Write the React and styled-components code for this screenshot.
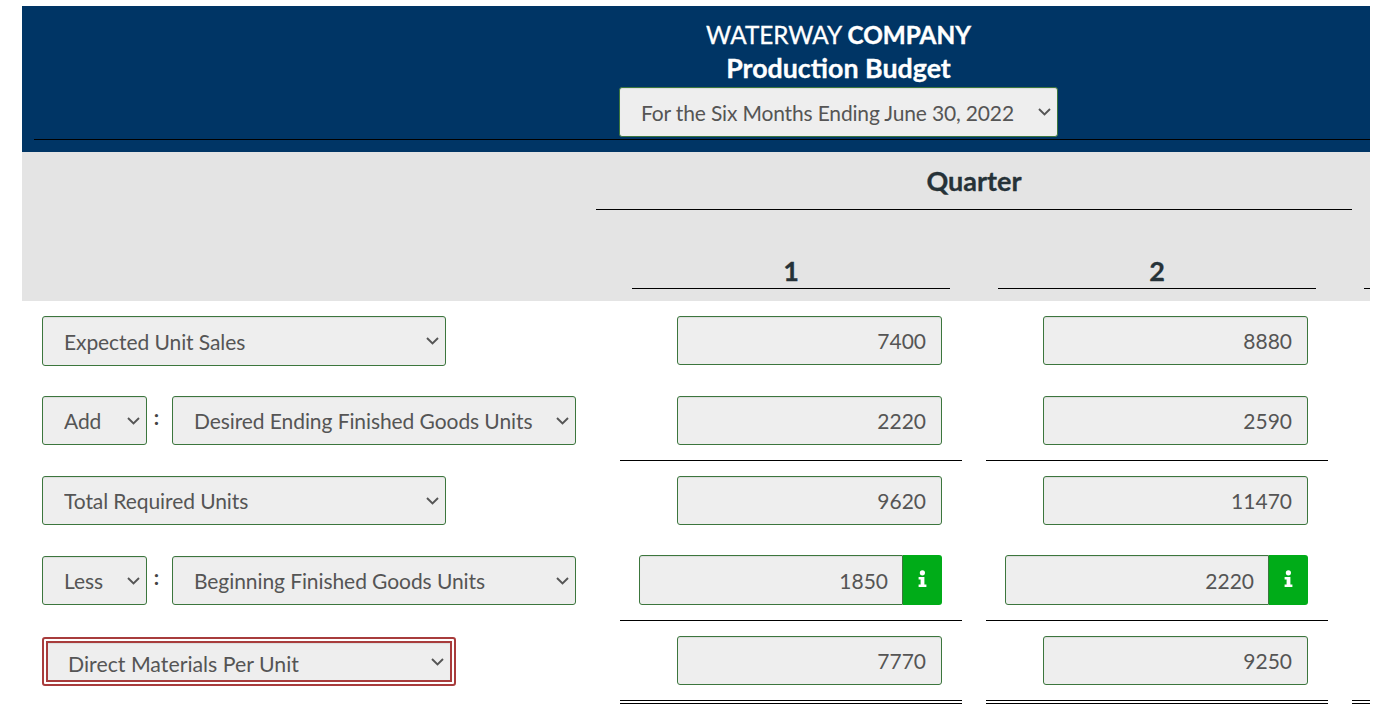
import React from 'react';
import styled, { createGlobalStyle } from 'styled-components';

const GlobalStyle = createGlobalStyle`
    html, body {
        margin: 0;
        padding: 0;
        background: #fff;
        overflow: hidden;
    }
    body {
        font-family: Lato, "Open Sans", sans-serif;
    }
`
const Sheet = styled.div`
    width: 1348px;
    margin: 6px 0 0 22px;
    overflow: hidden;
`
const Header = styled.header`
    height: 146px;
    background-color: #003565;
    padding-left: 12px;
    box-sizing: border-box;
`
const HeaderInner = styled.div`
    height: 134px;
    box-sizing: border-box;
    padding: 12px 0 0 273px;
    border-bottom: 1px solid #000;
    display: flex;
    flex-direction: column;
    align-items: center;
`
const Title = styled.h1`
    margin: 0;
    color: #fff;
    font-size: ${props => props.$size}px;
    line-height: ${props => props.$line}px;
    font-weight: ${props => props.$light ? 400 : 700};
    -webkit-text-stroke: 0.3px #fff;
    & b {
        font-weight: 700;
        -webkit-text-stroke: 0.4px #fff;
    }
`
const SelectBox = styled.div`
    position: relative;
    flex: none;
    display: flex;
    width: ${props => props.$width || 404}px;
    height: ${props => props.$height || 49}px;
    margin-top: ${props => props.$top || 0}px;
`
const Select = styled.select`
    appearance: none;
    width: 100%;
    height: 100%;
    box-sizing: border-box;
    padding: 0 21px;
    border: 1px solid #3c763d;
    border-radius: 3px;
    background-color: #eee;
    box-shadow: inset 0 1px 1px rgba(0, 0, 0, .075);
    color: #555;
    font-family: inherit;
    font-size: 21px;
    letter-spacing: ${props => props.$tight ? -0.16 : -0.08}px;
    outline: none;
`
const Chevron = styled.svg`
    position: absolute;
    right: ${props => props.$right || 7}px;
    top: 50%;
    width: 13px;
    height: 8px;
    margin-top: -4px;
    pointer-events: none;
`
const Band = styled.section`
    height: 149px;
    background-color: #e4e4e4;
    display: grid;
    grid-template-columns: 574px 756px 18px;
    grid-template-rows: 58px 91px;
`
const QuarterCell = styled.div`
    grid-column: 2;
    border-bottom: 1px solid #000;
    display: flex;
    justify-content: center;
    align-items: flex-start;
    padding-top: 13px;
    color: #263238;
    font-size: 27px;
    line-height: 32px;
    font-weight: 700;
    -webkit-text-stroke: 0.3px #263238;
`
const NumberRow = styled.div`
    grid-column: 1 / -1;
    display: grid;
    grid-template-columns: 610px 318px 48px 318px 48px 6px;
    align-items: end;
    height: 79px;
`
const NumberCell = styled.div`
    grid-column: ${props => props.$col};
    height: 32px;
    border-bottom: 1px solid #000;
    text-align: center;
    color: #263238;
    font-size: 27px;
    line-height: 30px;
    font-weight: 700;
    -webkit-text-stroke: 0.3px #263238;
`
const Body = styled.div`
    padding-top: 15px;
`
const Row = styled.div`
    display: grid;
    grid-template-columns: 586px 366px 366px 30px;
    height: 80px;
`
const LabelCell = styled.div`
    padding-left: 20px;
    display: flex;
    align-items: flex-start;
`
const Colon = styled.span`
    width: 25px;
    box-sizing: border-box;
    padding-right: 6px;
    text-align: center;
    color: #444;
    font-size: 21px;
    font-weight: 700;
    line-height: 42px;
`
const ErrorFrame = styled.div`
    border: 2px solid #a83c3c;
    border-radius: 3px;
    background: #fff;
    padding: 2px;
    margin-top: 1px;
    display: flex;
`
const ErrorSelect = styled(Select)`
    padding: 4px 20px 0;
    border: 2px solid #a83c3c;
    border-radius: 0;
    font-size: 21.3px;
    letter-spacing: 0;
`
const ValueCell = styled.div`
    position: relative;
    height: 100%;
    box-sizing: border-box;
    padding-right: 32px;
    display: flex;
    justify-content: flex-end;
    align-items: flex-start;
`
const Rule = styled.div`
    position: absolute;
    left: 12px;
    right: ${props => props.$open ? 0 : 12}px;
    top: ${props => props.$top}px;
    height: ${props => props.$double ? 2 : 0}px;
    border-top: 1px solid #000;
    border-bottom: ${props => props.$double ? '1px solid #000' : 'none'};
`
const Field = styled.div`
    display: flex;
    height: ${props => props.$info ? 50 : 49}px;
    margin-top: ${props => props.$info ? -1 : 0}px;
`
const Amount = styled.input`
    width: ${props => props.$info ? 264 : 265}px;
    height: 100%;
    box-sizing: border-box;
    padding: 0 ${props => props.$info ? 14 : 15}px 0 0;
    border: 1px solid #3c763d;
    border-radius: ${props => props.$info ? '3px 0 0 3px' : '3px'};
    background-color: #eee;
    box-shadow: inset 0 1px 1px rgba(0, 0, 0, .075);
    color: #555;
    text-align: right;
    font-family: inherit;
    font-size: 21px;
    outline: none;
`
const InfoButton = styled.button`
    width: 39px;
    height: 100%;
    padding: 0 0 3px;
    border: none;
    border-radius: 0 3px 3px 0;
    background-color: #00ac18;
    display: flex;
    align-items: center;
    justify-content: center;
`
const ThirdCell = styled.div`
    position: relative;
    height: 100%;
`

const InfoIcon = () => (
    <svg width="9" height="17" viewBox="0 0 9 17">
        <circle cx="4.4" cy="2.8" r="2.6" fill="#fff" />
        <path d="M0.6 7h5.8v7.4h2V17H0.6v-2.6h2V9.6h-2z" fill="#fff" />
    </svg>
);

const ChevronIcon = ({ right }) => (
    <Chevron $right={right} viewBox="0 0 13 8">
        <path d="M1 1l5.5 5.5L12 1" fill="none" stroke="#555" strokeWidth="1.9" />
    </Chevron>
);

const Dropdown = ({ label, width, height, top, tight }) => (
    <SelectBox $width={width} $height={height} $top={top}>
        <Select $tight={tight} defaultValue="a">
            <option value="a">{label}</option>
        </Select>
        <ChevronIcon />
    </SelectBox>
);

const ValueField = ({ value, info }) => (
    <Field $info={info}>
        <Amount readOnly value={value} $info={info} />
        {info && <InfoButton aria-label="info"><InfoIcon /></InfoButton>}
    </Field>
);

const rows = [
    { label: 'Expected Unit Sales', values: ['7400', '8880'], height: 50 },
    { prefix: 'Add', label: 'Desired Ending Finished Goods Units', values: ['2220', '2590'], rule: 64 },
    { label: 'Total Required Units', values: ['9620', '11470'] },
    { prefix: 'Less', label: 'Beginning Finished Goods Units', values: ['1850', '2220'], rule: 64, info: true },
];

const App = () => {
    return (
        <>
            <GlobalStyle />
            <Sheet>
                <Header>
                    <HeaderInner>
                        <Title $light $size={24.3} $line={33}>WATERWAY <b>COMPANY</b></Title>
                        <Title $size={26.8} $line={35}>Production Budget</Title>
                        <Dropdown label="For the Six Months Ending June 30, 2022" width={439} height={50} top={1} tight />
                    </HeaderInner>
                </Header>
                <Band>
                    <QuarterCell>Quarter</QuarterCell>
                    <NumberRow>
                        <NumberCell $col={2}>1</NumberCell>
                        <NumberCell $col={4}>2</NumberCell>
                        <NumberCell $col={6} />
                    </NumberRow>
                </Band>
                <Body>
                    {rows.map(row => (
                        <Row key={row.label}>
                            <LabelCell>
                                {row.prefix && (
                                    <>
                                        <Dropdown label={row.prefix} width={105} />
                                        <Colon>:</Colon>
                                    </>
                                )}
                                <Dropdown label={row.label} height={row.height} />
                            </LabelCell>
                            {row.values.map((value, i) => (
                                <ValueCell key={i}>
                                    <ValueField value={value} info={row.info} />
                                    {row.rule && <Rule $top={row.rule} />}
                                </ValueCell>
                            ))}
                        </Row>
                    ))}
                    <Row>
                        <LabelCell>
                            <ErrorFrame>
                                <SelectBox $width={406} $height={41}>
                                    <ErrorSelect defaultValue="a">
                                        <option value="a">Direct Materials Per Unit</option>
                                    </ErrorSelect>
                                    <ChevronIcon right={8} />
                                </SelectBox>
                            </ErrorFrame>
                        </LabelCell>
                        <ValueCell>
                            <ValueField value="7770" />
                            <Rule $top={64} $double />
                        </ValueCell>
                        <ValueCell>
                            <ValueField value="9250" />
                            <Rule $top={64} $double />
                        </ValueCell>
                        <ThirdCell>
                            <Rule $top={64} $double $open />
                        </ThirdCell>
                    </Row>
                </Body>
            </Sheet>
        </>
    )
}

export default App;
